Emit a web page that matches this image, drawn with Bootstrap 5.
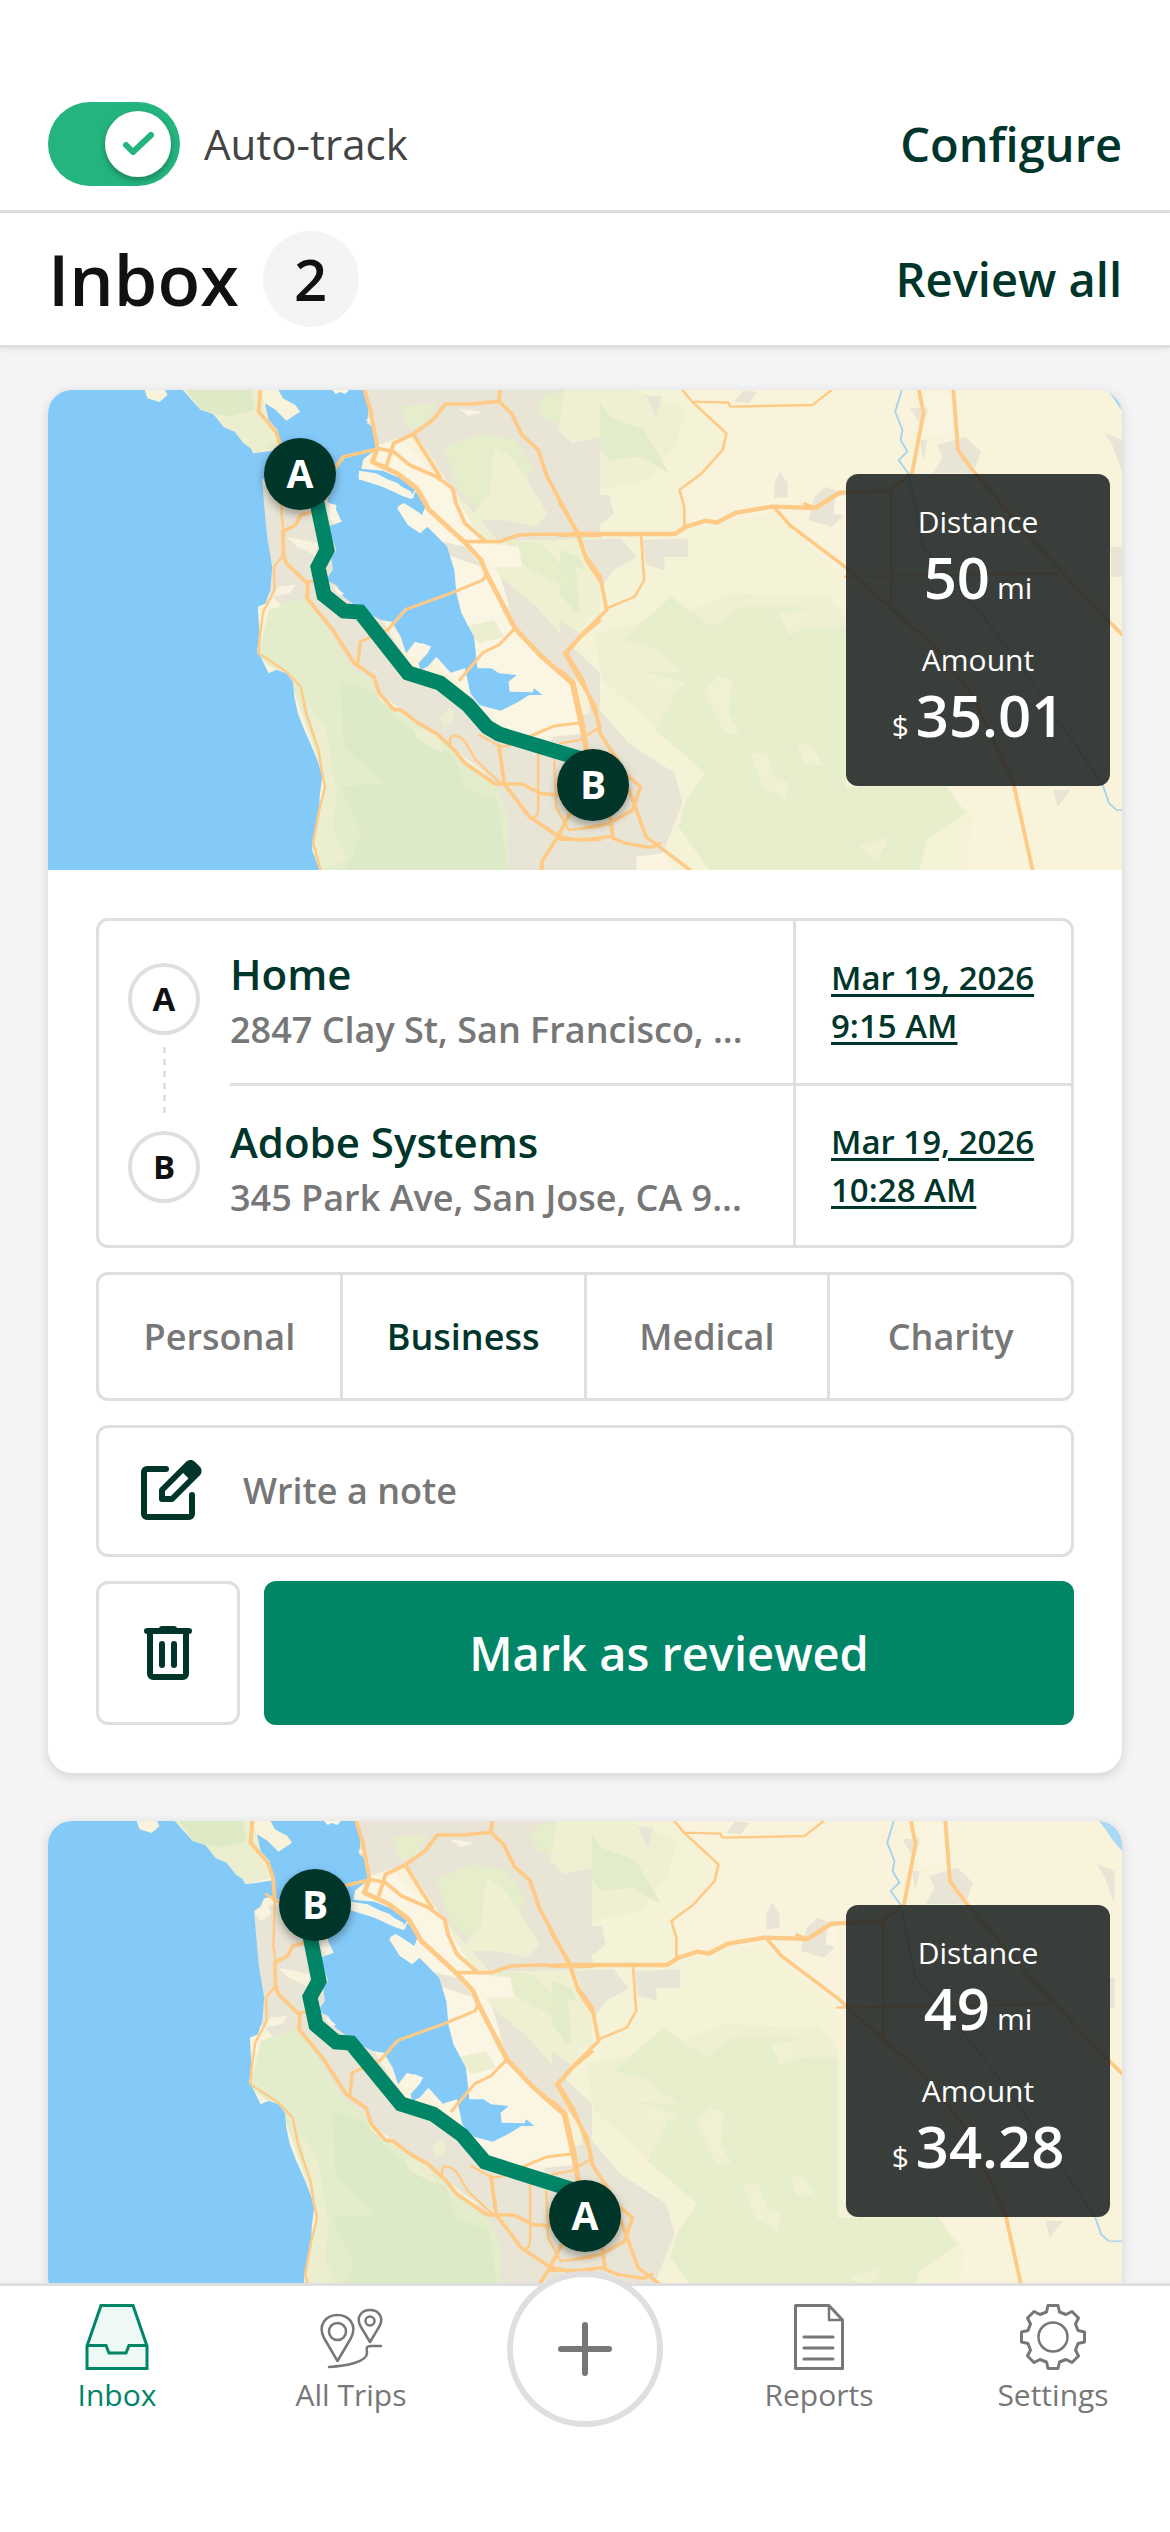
<!DOCTYPE html>
<html lang="en">
<head>
<meta charset="utf-8">
<meta name="viewport" content="width=device-width, initial-scale=1">
<title>Inbox</title>
<link href="https://cdn.jsdelivr.net/npm/bootstrap@5.3.0/dist/css/bootstrap.min.css" rel="stylesheet">
<style>
:root { --ink: #00352b; --brand: #008567; --line: #dfdfdf; --muted-text: #777; }
body { font-family: "Open Sans", sans-serif; font-size: 36px; line-height: 48px; color: #111; background: #f4f4f4; }
a, a:hover { color: var(--ink); }

/* top bars */
.track-bar { padding: 102px 48px 24px; border-bottom: 3px solid var(--line); }
.title-bar { padding: 18px 48px; border-bottom: 3px solid var(--line); box-shadow: 0 2px 6px rgba(0,0,0,.06); }
.track-bar .form-check-input { width: 132px; height: 84px; margin: 0; border: 0; border-radius: 42px; float: none; background-color: #ccc; }
.track-bar .form-check-input:checked { background-color: #24b47e; background-size: 132px 84px; background-position: center;
  background-image: url("data:image/svg+xml,%3Csvg xmlns='http://www.w3.org/2000/svg' viewBox='0 0 132 84'%3E%3Cdefs%3E%3Cfilter id='s' x='-20%25' y='-20%25' width='140%25' height='150%25'%3E%3CfeDropShadow dx='0' dy='3' stdDeviation='3' flood-opacity='.3'/%3E%3C/filter%3E%3C/defs%3E%3Ccircle cx='90' cy='42' r='33' fill='%23fff' filter='url(%23s)'/%3E%3Cpath d='M78 43l7 7 18-17' fill='none' stroke='%2324b47e' stroke-width='6' stroke-linecap='round' stroke-linejoin='round'/%3E%3C/svg%3E"); }
.track-bar label { font-size: 42px; color: #444; }
.bar-link { font-size: 47px; font-weight: 600; text-decoration: none; }
.page-title { font-size: 70px; line-height: 96px; font-weight: 600; }
.count-pill { width: 96px; height: 96px; font-size: 58px; font-weight: 600; background: #f4f4f4; }

/* trip cards */
.trip-feed { padding: 42px 48px; gap: 48px; }
.trip-card { border: 0; border-radius: 24px; box-shadow: 0 3px 12px rgba(0,0,0,.14); overflow: hidden; flex: none; }
.trip-map { position: relative; height: 480px; }
.trip-map > svg { display: block; width: 100%; height: 100%; }
.trip-map .pin-letter { font: 700 39px "Open Sans", sans-serif; fill: #fff; text-anchor: middle; }
.trip-stats { position: absolute; right: 12px; top: 84px; width: 264px; height: 312px; padding-top: 27px; gap: 28px; border-radius: 12px; background: rgba(30,35,34,.87); color: #fff; }
.stat-label { font-size: 30px; line-height: 42px; }
.stat-value { height: 68px; gap: 7px; font-size: 58px; line-height: 68px; font-weight: 600; }
.stat-value small { font-size: 30px; line-height: 42px; font-weight: 400; }
.trip-body { padding: 48px; gap: 24px; }
.outlined { border: 3px solid var(--line); border-radius: 12px; background: #fff; }

.stop-rail { padding: 42px 30px 0 29px; gap: 12px; }
.stop-dot { width: 72px; height: 72px; border: 4px solid var(--line); font-size: 33px; font-weight: 700; }
.stop-dash { width: 3px; height: 72px; background: repeating-linear-gradient(var(--line) 0 6px, transparent 6px 12px); }
.stop-row { height: 162px; }
.stop-row + .stop-row { border-top: 3px solid var(--line); }
.stop-text { padding: 25px 24px 0 0; min-width: 0; }
.stop-row + .stop-row .stop-text { padding-top: 28px; }
.stop-name { font-size: 42px; line-height: 56px; font-weight: 600; color: var(--ink); }
.stop-addr { font-size: 36px; line-height: 56px; font-weight: 600; color: var(--muted-text); }
.stop-time { width: 278px; padding-left: 35px; border-left: 3px solid var(--line); font-size: 33px; font-weight: 600; }
.stop-time a { text-decoration-thickness: 3px; text-underline-offset: 4px; }

.kind-tabs .btn { height: 123px; padding: 0; border: 0; border-radius: 0; font-size: 36px; line-height: 123px; font-weight: 600; color: var(--muted-text); flex: 1 1 0; }
.kind-tabs .btn + input + .btn { border-left: 3px solid var(--line); }
.kind-tabs .btn-check:checked + .btn { color: var(--ink); background: transparent; }
.note-box { height: 132px; padding-left: 42px; gap: 40px; }
.note-box .form-control { border: 0; padding: 0; font-size: 36px; font-weight: 600; background: transparent; box-shadow: none; }
.note-box .form-control::placeholder { color: var(--muted-text); }
.btn-trash { width: 144px; height: 144px; }
.btn-review, .btn-review:hover { font-size: 47px; font-weight: 600; color: #fff; background: var(--brand); border-radius: 12px; }

/* bottom navigation */
.tab-nav { height: 249px; border-top: 3px solid var(--line); background: #fff; position: relative; z-index: 2; }
.tab-nav a { flex: 1 1 0; padding-top: 18px; font-size: 30px; line-height: 42px; gap: 4px; color: #777; text-decoration: none; }
.tab-nav a.active { color: var(--brand); }
.plus-slot { flex: 1 1 0; }
.btn-plus { width: 156px; height: 156px; margin-top: -15px; padding: 0; border: 6px solid var(--line); border-radius: 50%; background: #fff; }
</style>
<script src="https://cdn.jsdelivr.net/npm/bootstrap@5.3.0/dist/js/bootstrap.bundle.min.js"></script>
</head>
<body class="vh-100 d-flex flex-column overflow-hidden">

<!-- shared base map -->
<svg width="0" height="0" class="position-absolute" aria-hidden="true">
  <defs>
    <filter id="pinShadow" x="-40%" y="-40%" width="180%" height="190%"><feDropShadow dx="0" dy="4" stdDeviation="5" flood-opacity=".35"/></filter>
    <g id="bayMap">
      <rect width="1100" height="480" fill="#f8f3da"/>
      <!-- hills and valleys, east -->
      <g transform="translate(512 -10) scale(.38266 .33333)">
        <path fill="#f4f2d7" d="M-300 30H320L435 160 425 210 312 330 330 440 560 400 747 600V700L960 1220 1080 1300 1060 1470H-300Z"/>
        <path fill="#eff0d2" d="M-300 30H200L330 90 300 200 230 300 100 330 120 600 20 850-300 800ZM90 760L330 700 440 640 700 650 747 720V800L560 840 300 900 400 1000 250 1040 110 900Z"/>
        <path fill="#e3ecca" d="M0 35L90 45 130 110 220 150 285 280 210 230 130 240 90 190 30 200 0 170ZM0 510L50 530 90 640 40 700 0 640Z"/>
        <path fill="#e6eecc" d="M290 650L400 740 470 680 640 680 640 740 747 740V1220H1010L1060 1300 960 1380 940 1470H390L310 1340 330 1260 380 1180 250 1050 300 940 200 870 330 880 240 800 160 780Z"/>
        <path fill="#f0f1d3" d="M375 930L410 890 450 900 440 1000 470 1060 430 1060ZM500 1120L540 1120 560 1190 600 1210 590 1260 530 1220ZM620 1090L660 1100 690 1160 640 1150ZM570 700L640 690 650 740 600 765ZM780 1400L860 1370 830 1440ZM205 870L330 910 290 940 240 935Z"/>
        <path fill="#e9e5d6" d="M0 180L60 180 80 230 105 270 100 380 50 400 30 370 0 340ZM60 480L160 475 200 530 180 545 140 570 110 620ZM215 480L335 475 335 530 270 530 275 570 225 555ZM225 45L265 50 250 115ZM480 30L515 35 495 70 455 65ZM575 275L595 310 595 350 560 355 560 310ZM665 350L695 320 747 345 747 400 710 440 650 420ZM985 195L1060 170 1100 215 1080 280 975 280 1000 230ZM915 85L975 80 940 130ZM940 180L960 180 950 240ZM1290 1230L1335 1230 1300 1280ZM1425 160L1470 180V280L1445 200ZM1440 500H1470V590H1440ZM75 880L105 990 180 1090 300 1180 320 1270 250 1470H0V1040L80 1100ZM100 345L130 345 140 400 110 430 80 400ZM0 720L50 760 20 850 0 850Z"/>
        <path fill="#fbf4e1" d="M0 850L40 910 80 1060 60 1100 0 1100ZM720 350L747 345V410L715 400ZM960 40L1020 40 1020 160 960 170ZM200 1430L270 1420 300 1470H200Z"/>
        <path fill="#a9d9f4" d="M1435 38C1450 55 1460 90 1500 130L1540 30H1430Z"/>
      </g>
      <!-- peninsula and east bay -->
      <g transform="translate(-8 -10) scale(.35714 .33333)">
        <path fill="#e9e5d6" d="M900 30H1568V470L1450 480 1280 480 1150 320 1050 160 930 200ZM600 290L800 270 830 500 1050 880 1300 1020 1568 1000V1470H760L1250 1180 900 900 640 640Z"/>
        <path fill="#e6edcb" d="M1390 80L1420 40 1568 30V130L1500 150 1420 120ZM1130 200L1240 160 1330 180 1380 260 1350 340 1240 400 1170 330ZM1300 480L1400 490 1500 600 1568 640V700L1470 620 1360 560ZM1010 80L1110 70 1080 130 1030 150Z"/>
        <path fill="#eff0d2" d="M1270 200L1320 230 1380 330 1420 400 1390 440 1300 420 1200 420 1260 340ZM1470 30L1568 30V170L1490 190 1450 150ZM1500 560L1568 590V720L1510 680Z"/>
        <path fill="#fbf5e4" d="M920 210L1010 180 1110 290 1160 340 1240 490 1340 500 1350 560 1270 560 1330 660 1290 690 1330 760 1500 930 1530 1060 1350 1080 1250 1040 1180 920 1000 760 1165 740 1090 450 1000 420 900 290Z"/>
        <path fill="#e9e5d6" d="M1110 480L1190 500 1240 560 1180 540 1130 520ZM1290 590L1390 680 1480 790 1568 880V980L1500 900 1400 830 1330 740Z"/>
        <path fill="#ecefcf" d="M1190 740L1270 720 1300 770 1230 790Z"/>
        <path fill="#e4edcb" d="M640 690L750 650 870 860 930 900 950 960 1010 1000 1110 1070 1280 1220 1310 1300 1310 1470H760L800 1200 700 900 610 830Z"/>
        <path fill="#ddeac7" d="M840 900L930 930 1000 1020 1160 1130 1190 1220 1280 1260 1310 1470H860L900 1360 840 1220 960 1210 850 1100Z"/>
        <path fill="#ebefcf" d="M745 960L800 1040 830 1240 820 1340 860 1440 785 1470 770 1380 800 1220ZM1040 1040L1110 1060 1130 1120 1060 1080ZM1120 1010L1150 980 1160 1020 1130 1040ZM400 30H620L640 130 670 200 597 220 512 140Z"/>
        <path fill="#deeac6" d="M410 30H590L600 90 530 110 450 90Z"/>
        <path fill="#f7f3df" d="M622 300L660 280 670 310 640 330ZM690 470L780 490 770 525 720 500ZM665 620L715 615 700 640 650 650ZM1170 85L1240 95 1200 108ZM1390 1080L1440 1060 1430 1090Z"/>
        <!-- ocean -->
        <path fill="#84caf9" d="M-20 30H293L301 55 335 66 357 45 350 30H400L450 90 485 102 515 142 545 155 570 190 590 205 597 220 640 214 676 208V255L650 262 640 285 622 300 628 380 636 470 650 560 645 630 632 670 610 680 615 770 608 810 622 840 640 880 662 870 690 880 708 905 712 950 722 1000 740 1050 765 1110 780 1150 790 1190 783 1250 782 1310 765 1370 762 1410 785 1480H-20Z"/>
        <!-- bay -->
        <path fill="#84caf9" d="M668 30H905L912 60 920 80 916 130 930 140 945 205 905 238 895 290 960 320 1020 350 1045 355 1050 335 1085 365 1070 405 1015 370 1000 385 1030 435 1065 460 1085 440 1140 500 1160 570 1166 640 1180 700 1215 770 1225 865 1265 865 1285 880 1335 885 1312 905 1315 935 1380 937 1383 925 1407 945 1370 945 1335 968 1290 992 1230 975 1205 940 1190 865 1150 878 1110 830 1085 860 1065 870 1060 850 1085 820 1095 800 1050 785 1025 820 1010 770 985 725 955 720 900 690 850 650 830 615 800 600 820 570 815 530 830 510 805 440 845 425 825 380 805 365V330L750 290 700 270 676 258V205L665 150 640 120 630 70 660 90 690 122 728 95 715 75 680 55Z"/>
        <path fill="#84caf9" d="M885 265L960 272 1010 295 1050 330 1040 345 1000 308 950 290 890 288Z"/>
        <path fill="#fbf5e4" d="M818 30H865L855 42 840 36 828 42ZM912 120L925 115 928 130ZM1072 790L1095 800 1065 835 1030 825 1045 800ZM940 225L960 230 950 250 920 245ZM810 370L830 375 828 400 845 425 812 420ZM820 615L852 642 835 645ZM893 272L940 280 1040 335 1040 358 960 320 892 298ZM1003 378L1020 370 1062 398 1075 440 1065 460 1028 432 1020 405Z"/>
        <g fill="none" stroke="#ffca85" stroke-linejoin="round" stroke-linecap="round" stroke-width="11">
          <path d="M617 30L612 95 660 155 675 200 680 270M680 455L682 525 690 550 750 612 748 655 820 750 880 850 935 890 950 940 990 988 1010 990 1060 1030 1110 1060 1160 1110 1190 1150 1275 1212 1350 1212 1400 1240 1450 1245M680 455L715 435 730 405 765 395 803 350"/>
          <path d="M800 300L850 230 945 207M908 30L925 90 945 205 990 215 1035 255 1110 290 1155 325 1165 370 1190 430 1245 482"/>
          <path stroke-width="14" d="M945 205L930 245 1000 280 1055 325 1090 390 1190 488 1235 540 1250 580 1330 745 1400 825 1490 910 1515 1030 1530 1110"/>
          <path d="M970 258L990 190 1045 162 1120 290M1045 162L1100 120 1135 72 1205 72 1285 64 1288 30M1285 64L1320 100 1350 165 1395 210 1420 290 1505 460 1530 540 1568 600"/>
          <path d="M1190 485L1290 484 1340 465 1420 462 1568 466"/>
          <path stroke-width="9" d="M1250 580L1240 600 1150 640 1025 688 975 748 897 785 890 850M1330 745L1285 795 1240 818 1175 900M750 605L790 600M1568 722L1515 770 1475 820 1520 900 1568 1040M1370 1070L1440 1038 1515 1028"/>
          <path d="M1285 1095L1300 1212 1370 1310 1450 1368 1500 1380 1568 1378M1488 1290L1450 1370 1405 1445V1470"/>
          <path stroke-width="7" d="M682 525L655 560 657 630 625 695 615 770 612 820 690 875 730 920 745 1000 780 1110 790 1180 798 1220 780 1300 765 1390 785 1470M680 270L676 400 682 455M655 250L700 280M1150 1090C1140 1060 1170 1060 1190 1085L1220 1140 1290 1210M1395 1120V1280C1395 1310 1385 1318 1370 1312M1440 1140L1445 1280 1480 1350 1568 1340M1230 1065L1290 1100 1350 1090"/>
        </g>
      </g>
      <g transform="translate(512 -10) scale(.38266 .33333)" fill="none" stroke="#ffca85" stroke-linejoin="round" stroke-linecap="round" stroke-width="10">
        <path stroke-width="13" d="M0 465L48 462 300 462 330 440 380 422 410 428 460 398 555 380 668 384 730 338 860 332"/>
        <path d="M665 383L640 372M860 332L920 280 950 100 938 30M560 382L600 435 745 560 870 690 980 800 1080 950 1185 1210 1235 1470M1028 30L1040 210 1078 270 1250 500 1440 730 1500 800"/>
        <path d="M0 370L48 460 65 525 105 590 122 690 60 760 12 820 60 915 92 980 105 1060 150 1140 190 1260 225 1370 340 1470M0 870L35 905 60 1030 70 1110M0 1378L70 1378 130 1370 170 1390 240 1402 260 1390M130 1300L138 1370M130 1140L210 1220 190 1290 130 1330 60 1345"/>
        <path stroke-width="7" d="M320 30L345 65 440 68 445 80 660 75 710 30M345 65L435 160 425 210 370 280 312 330 325 380 325 440M212 470L220 600 195 650 122 685M865 332V680M745 590L1300 580M0 1090L50 1080 100 1045"/>
        <path stroke="#a6d3f0" stroke-width="5" d="M893 30L876 95 895 150 890 180 908 215 885 240 910 280 950 500 1100 700 1200 850 1350 1100 1420 1220 1435 1270 1455 1290 1540 1292"/>
      </g>
    </g>
  </defs>
</svg>

<header class="bg-white position-relative">
  <div class="track-bar d-flex align-items-center justify-content-between">
    <div class="d-flex align-items-center gap-4">
      <input class="form-check-input" type="checkbox" role="switch" id="autoTrack" checked>
      <label for="autoTrack">Auto-track</label>
    </div>
    <a class="bar-link" href="#configure">Configure</a>
  </div>
  <div class="title-bar d-flex align-items-center justify-content-between">
    <div class="d-flex align-items-center gap-4">
      <h1 class="page-title m-0">Inbox</h1>
      <span class="count-pill rounded-circle d-flex align-items-center justify-content-center">2</span>
    </div>
    <a class="bar-link" href="#review">Review all</a>
  </div>
</header>

<main class="trip-feed d-flex flex-column flex-grow-1 overflow-hidden">
  <article class="card trip-card">
    <div class="trip-map">
      <svg viewBox="0 0 1074 480" preserveAspectRatio="xMidYMid slice" role="img" aria-label="Route from San Francisco to San Jose">
        <use href="#bayMap"/>
        <path d="M268 108L279 160 270 177 276 205 296 221 312 222 360 283 392 293 420 315 439 337 451 344 540 371" fill="none" stroke="#008567" stroke-width="15"/>
        <g filter="url(#pinShadow)" fill="#00352b"><circle cx="252" cy="84" r="36"/><circle cx="545" cy="395" r="36"/></g>
        <text class="pin-letter" x="252" y="98">A</text><text class="pin-letter" x="545" y="409">B</text>
      </svg>
      <div class="trip-stats d-flex flex-column text-center">
        <div><div class="stat-label">Distance</div><div class="stat-value d-flex justify-content-center align-items-baseline">50<small>mi</small></div></div>
        <div><div class="stat-label">Amount</div><div class="stat-value d-flex justify-content-center align-items-baseline"><small>$</small>35.01</div></div>
      </div>
    </div>
    <div class="trip-body d-flex flex-column">
      <div class="outlined d-flex">
        <div class="stop-rail d-flex flex-column align-items-center">
          <span class="stop-dot rounded-circle d-flex align-items-center justify-content-center">A</span>
          <span class="stop-dash"></span>
          <span class="stop-dot rounded-circle d-flex align-items-center justify-content-center">B</span>
        </div>
        <div class="flex-grow-1 overflow-hidden">
          <div class="stop-row d-flex">
            <div class="stop-text flex-grow-1">
              <div class="stop-name">Home</div>
              <div class="stop-addr text-truncate">2847 Clay St, San Francisco, ...</div>
            </div>
            <div class="stop-time d-flex align-items-center flex-shrink-0"><a href="#start">Mar 19, 2026<br>9:15 AM</a></div>
          </div>
          <div class="stop-row d-flex">
            <div class="stop-text flex-grow-1">
              <div class="stop-name">Adobe Systems</div>
              <div class="stop-addr text-truncate">345 Park Ave, San Jose, CA 9...</div>
            </div>
            <div class="stop-time d-flex align-items-center flex-shrink-0"><a href="#end">Mar 19, 2026<br>10:28 AM</a></div>
          </div>
        </div>
      </div>
      <div class="kind-tabs outlined d-flex" role="group" aria-label="Trip purpose">
        <input type="radio" class="btn-check" name="kind" id="kPersonal"><label class="btn" for="kPersonal">Personal</label>
        <input type="radio" class="btn-check" name="kind" id="kBusiness" checked><label class="btn" for="kBusiness">Business</label>
        <input type="radio" class="btn-check" name="kind" id="kMedical"><label class="btn" for="kMedical">Medical</label>
        <input type="radio" class="btn-check" name="kind" id="kCharity"><label class="btn" for="kCharity">Charity</label>
      </div>
      <div class="note-box outlined d-flex align-items-center">
        <label for="note" class="d-flex" aria-label="Note">
          <svg width="62" height="62" viewBox="0 0 62 62" fill="none" stroke="#00352b" stroke-width="6" stroke-linecap="round" stroke-linejoin="round"><path d="M25 9H6a3 3 0 0 0-3 3v42a3 3 0 0 0 3 3h42a3 3 0 0 0 3-3V35"/><path d="M21 39V30L47 4q3-2 5 0l5 5q1 2 0 4L31 39Z"/><path d="M42 10L48 4q2-2 4 0l5 5q2 2 0 4l-6 6Z" fill="#00352b" stroke-width="4"/></svg>
        </label>
        <input id="note" type="text" class="form-control" placeholder="Write a note">
      </div>
      <div class="d-flex gap-4">
        <button type="button" class="btn btn-trash outlined d-flex align-items-center justify-content-center p-0" aria-label="Delete trip">
          <svg width="48" height="56" viewBox="0 0 48 56" fill="none" stroke="#00352b" stroke-width="6" stroke-linecap="round" stroke-linejoin="round"><path d="M3 6h42M18 4h12M6 8v41a3 3 0 0 0 3 3h30a3 3 0 0 0 3-3V8M18 19v21M30 19v21"/></svg>
        </button>
        <button type="button" class="btn btn-review flex-grow-1">Mark as reviewed</button>
      </div>
    </div>
  </article>

  <article class="card trip-card">
    <div class="trip-map">
      <svg viewBox="0 0 1074 480" preserveAspectRatio="xMidYMid slice" role="img" aria-label="Route from San Jose to San Francisco">
        <use href="#bayMap" x="-8"/>
        <path d="M262 115L271 160 262 176 268 204 288 221 303 222 353 283 385 293 414 314 437 341 532 371" fill="none" stroke="#008567" stroke-width="15"/>
        <g filter="url(#pinShadow)" fill="#00352b"><circle cx="267" cy="84" r="36"/><circle cx="537" cy="395" r="36"/></g>
        <text class="pin-letter" x="267" y="98">B</text><text class="pin-letter" x="537" y="409">A</text>
      </svg>
      <div class="trip-stats d-flex flex-column text-center">
        <div><div class="stat-label">Distance</div><div class="stat-value d-flex justify-content-center align-items-baseline">49<small>mi</small></div></div>
        <div><div class="stat-label">Amount</div><div class="stat-value d-flex justify-content-center align-items-baseline"><small>$</small>34.28</div></div>
      </div>
    </div>
  </article>
</main>

<nav class="tab-nav d-flex flex-shrink-0 align-items-start" aria-label="Main">
  <a class="active d-flex flex-column align-items-center" href="#inbox" aria-current="page">
    <svg width="66" height="66" viewBox="0 0 66 66" fill="#eef8f5" stroke="#008567" stroke-width="3"><path d="M17 1.500H49L63 42V64.500H3V42Z"/><path fill="none" d="M3 41.500H22L25 49H42L45 41.500H63"/></svg>
    Inbox
  </a>
  <a class="d-flex flex-column align-items-center" href="#trips">
    <svg width="66" height="66" viewBox="0 0 66 66" fill="none" stroke="currentColor" stroke-width="2.500" stroke-linecap="round" stroke-linejoin="round"><path d="M19.500 57L6 34C-1 20 9 11 19.500 11S40 20 33 34Z"/><circle cx="19.500" cy="27.500" r="8.500"/><path d="M52 38L43 23C37 13 44 6 52 6S67 13 61 23Z"/><circle cx="52" cy="17" r="4.500"/><path d="M11 63C28 62 49 58 49 49C49 45 47 42 53 42H63"/></svg>
    All Trips
  </a>
  <div class="plus-slot d-flex justify-content-center">
    <button type="button" class="btn-plus" aria-label="Add trip"><svg width="54" height="54" viewBox="0 0 54 54" stroke="#777" stroke-width="6" stroke-linecap="round"><path d="M27 3V51M3 27H51"/></svg></button>
  </div>
  <a class="d-flex flex-column align-items-center" href="#reports">
    <svg width="66" height="66" viewBox="0 0 66 66" fill="none" stroke="currentColor" stroke-width="3" stroke-linejoin="round"><path d="M9.500 1.500H43L56.500 16V64.500H9.500Z"/><path stroke-width="2.500" d="M43 2V16H56"/><path stroke-linecap="round" d="M18 33H47M18 44H47M18 55H47"/></svg>
    Reports
  </a>
  <a class="d-flex flex-column align-items-center" href="#settings">
    <svg width="66" height="66" viewBox="0 0 66 66" fill="none" stroke="currentColor" stroke-width="3" stroke-linejoin="round"><path d="M28 1.500H38L39.500 8L46 10.500L52 7.500L58.500 14L55.500 20L58 26.500L64.500 28V38L58 39.500L55.500 46L58.500 52L52 58.500L46 55.500L39.500 58L38 64.500H28L26.500 58L20 55.500L14 58.500L7.500 52L10.500 46L8 39.500L1.500 38V28L8 26.500L10.500 20L7.500 14L14 7.500L20 10.500L26.500 8Z"/><circle cx="33" cy="33" r="14.500" stroke-width="2.500"/></svg>
    Settings
  </a>
</nav>
</body>
</html>
